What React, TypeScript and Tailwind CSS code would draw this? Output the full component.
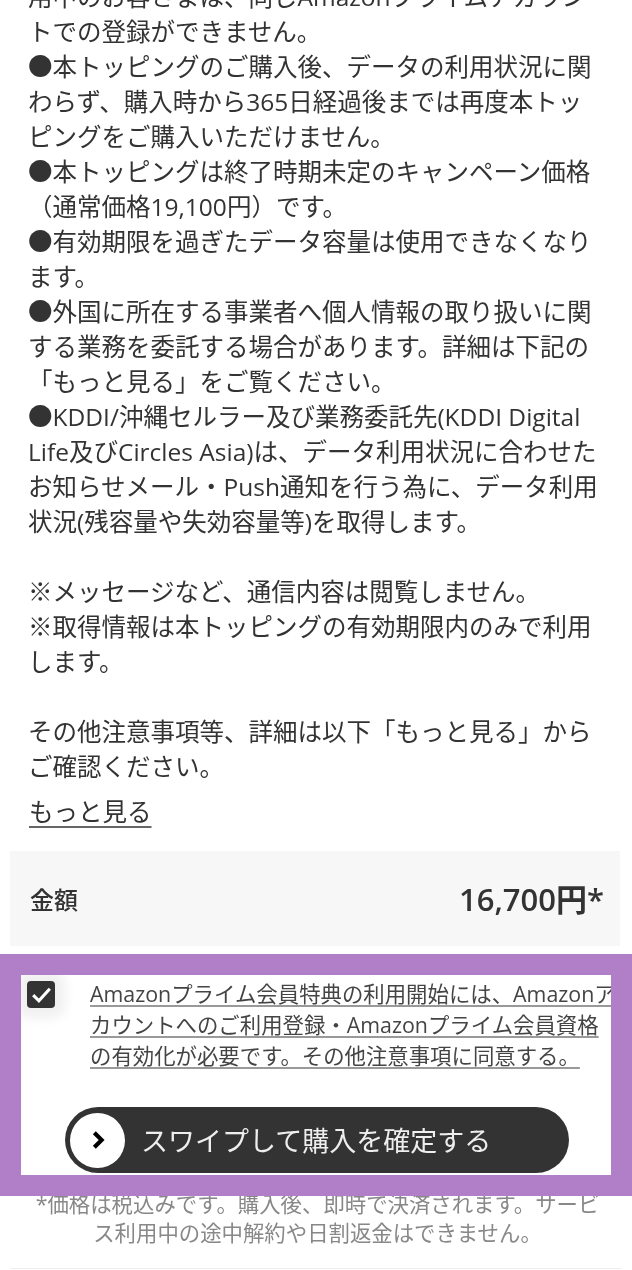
const notes = [
  '用中のお客さまは、同じAmazonプライムアカウン',
  'トでの登録ができません。',
  '●本トッピングのご購入後、データの利用状況に関',
  'わらず、購入時から365日経過後までは再度本トッ',
  'ピングをご購入いただけません。',
  '●本トッピングは終了時期未定のキャンペーン価格',
  '（通常価格19,100円）です。',
  '●有効期限を過ぎたデータ容量は使用できなくなり',
  'ます。',
  '●外国に所在する事業者へ個人情報の取り扱いに関',
  'する業務を委託する場合があります。詳細は下記の',
  '「もっと見る」をご覧ください。',
  '●KDDI/沖縄セルラー及び業務委託先(KDDI Digital',
  'Life及びCircles Asia)は、データ利用状況に合わせた',
  'お知らせメール・Push通知を行う為に、データ利用',
  '状況(残容量や失効容量等)を取得します。',
  '',
  '※メッセージなど、通信内容は閲覧しません。',
  '※取得情報は本トッピングの有効期限内のみで利用',
  'します。',
  '',
  'その他注意事項等、詳細は以下「もっと見る」から',
  'ご確認ください。',
];

const agreement = [
  'Amazonプライム会員特典の利用開始には、Amazonア',
  'カウントへのご利用登録・Amazonプライム会員資格',
  'の有効化が必要です。その他注意事項に同意する。',
];

export default function App() {
  return (
    <div className="h-[1270px] w-[632px] overflow-hidden bg-white font-['Open_Sans','Noto_Sans_CJK_JP',sans-serif] text-[#333]">
      <div className="-mt-[21px] pl-[28px] text-[24.5px] leading-[35px] blur-[0.4px]">
        {notes.map((line, i) => (
          <div key={i} className="h-[35px] whitespace-nowrap">
            {line}
          </div>
        ))}
        <div className="ml-[1px] mt-[11px] h-[34px] text-[24.5px] leading-[34px] underline decoration-[#666] underline-offset-[5px]">もっと見る</div>
      </div>

      <div className="ml-[10px] mr-[12px] mt-[22px] flex h-[95px] items-center justify-between bg-[#f7f7f7] pl-[20px] pr-[16px] pt-[2px]">
        <span className="text-[24px] font-medium blur-[0.4px]">金額</span>
        <span className="text-[31px] font-semibold blur-[0.4px]">16,700円*</span>
      </div>

      <div className="relative z-10 mt-[8px] h-[242px] bg-[#b07fc7] px-[21px] py-[21px]">
        <div className="h-[200px] overflow-hidden bg-white">
          <div className="flex">
            <div className="ml-[6px] mt-[6px] flex h-[27px] w-[28px] shrink-0 items-center justify-center rounded-[4px] bg-[#333] text-white shadow-[0_0_12px_10px_#f0f0f0]">
              <svg viewBox="0 0 24 24" className="h-[25px] w-[25px]" fill="none" stroke="currentColor" strokeWidth="3">
                <path d="M4 12.5l5.5 5.5L20 6.5" />
              </svg>
            </div>
            <div className="ml-[35px] pt-[3px] text-[21.4px] leading-[31px] text-[#444] blur-[0.4px]">
              {agreement.map((line, i) => (
                <div key={i} className="h-[31px] whitespace-nowrap underline decoration-[#999] underline-offset-[3px]">
                  {line}
                </div>
              ))}
            </div>
          </div>
          <div className="ml-[44px] mt-[36px] flex h-[66px] w-[504px] items-center rounded-full bg-[#333] pl-[5px]">
            <div className="flex h-[55px] w-[55px] items-center justify-center rounded-full bg-white text-black">
              <svg viewBox="0 0 24 24" className="h-[22px] w-[22px]" fill="none" stroke="currentColor" strokeWidth="4.5">
                <path d="M8 4l8 8-8 8" />
              </svg>
            </div>
            <span className="ml-[16px] whitespace-nowrap pt-[3px] text-[27px] text-[#eeeeee] blur-[0.4px]">スワイプして購入を確定する</span>
          </div>
        </div>
      </div>

      <div className="-mt-[7px] pl-[3px] text-center text-[21.4px] leading-[29px] text-[#888] blur-[0.4px]">
        <div className="whitespace-nowrap">*価格は税込みです。購入後、即時で決済されます。サービ</div>
        <div className="whitespace-nowrap">ス利用中の途中解約や日割返金はできません。</div>
      </div>
      <div className="mx-[10px] mt-[21px] border-t border-[#eeeeee]" />
    </div>
  );
}
